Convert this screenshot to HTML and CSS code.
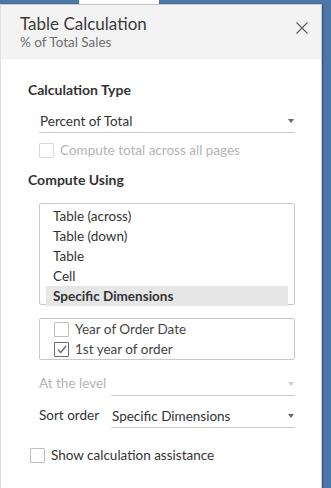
FILE: index.html
```html
<!DOCTYPE html>
<html lang="en">
<head>
    <meta charset="UTF-8">
    <meta name="viewport" content="width=device-width, initial-scale=1.0">
    <title>Table Calculation</title>
    <link rel="stylesheet" href="styles.css">
</head>
<body>
    <div class="topbar"><div class="tab"></div></div>
    <div class="dialog">
        <div class="dialog-header">
            <div class="titles">
                <div class="title">Table Calculation</div>
                <div class="subtitle">% of Total Sales</div>
            </div>
            <svg class="close" width="12" height="12" viewBox="0 0 12 12">
                <path d="M0.5 0.5 L11.5 11.5 M11.5 0.5 L0.5 11.5" stroke="#606060" stroke-width="1.2" fill="none"/>
            </svg>
        </div>

        <div class="dialog-body">
            <h3 class="section-title">Calculation Type</h3>
            <div class="select">
                <span>Percent of Total</span>
                <span class="arrow"></span>
            </div>
            <div class="check disabled indent">
                <span class="box"></span>
                <span>Compute total across all pages</span>
            </div>

            <h3 class="section-title compute">Compute Using</h3>
            <div class="listbox">
                <div class="item">Table (across)</div>
                <div class="item">Table (down)</div>
                <div class="item">Table</div>
                <div class="item">Cell</div>
                <div class="item selected">Specific Dimensions</div>
            </div>

            <div class="dimbox">
                <div class="check">
                    <span class="box"></span>
                    <span>Year of Order Date</span>
                </div>
                <div class="check">
                    <span class="box checked">
                        <svg width="10" height="9" viewBox="0 0 10 9"><path d="M1 4.5 L3.8 7.5 L9 1" stroke="#666" stroke-width="1.4" fill="none"/></svg>
                    </span>
                    <span>1st year of order</span>
                </div>
            </div>

            <div class="field-row disabled">
                <span class="field-label">At the level</span>
                <div class="select small">
                    <span></span>
                    <span class="arrow"></span>
                </div>
            </div>
            <div class="field-row">
                <span class="field-label">Sort order</span>
                <div class="select small">
                    <span>Specific Dimensions</span>
                    <span class="arrow"></span>
                </div>
            </div>

            <div class="check assist">
                <span class="box"></span>
                <span>Show calculation assistance</span>
            </div>
        </div>
    </div>
</body>
</html>
```

FILE: styles.css
```css
:root {
    --blue: #4b76a6;
    --text: #333333;
    --text-muted: #666666;
    --disabled: #b4b4b4;
    --border: #c8c8c8;
    --header: #f3f3f3;
}

* {
    margin: 0;
    padding: 0;
    box-sizing: border-box;
    font-family: Lato, "Noto Sans", sans-serif;
}

body {
    background: var(--blue);
    width: 331px;
    height: 488px;
    overflow: hidden;
}

.topbar {
    height: 4px;
    padding-left: 79px;
}

.tab {
    width: 80px;
    height: 4px;
    background: #ffffff;
}

.dialog {
    width: 322px;
    height: 484px;
    background: #ffffff;
    border-top: 1px solid var(--border);
    border-right: 1px solid var(--border);
    border-left: 1px solid #e0e0e0;
    box-shadow: 1px 0 1px rgba(0,0,0,0.25);
}

.dialog-header {
    background: var(--header);
    height: 54px;
    padding: 8px 13px 0 19px;
    display: flex;
    justify-content: space-between;
    align-items: flex-start;
}

.title {
    font-size: 17px;
    line-height: 21px;
    color: #3a3a3a;
}

.subtitle {
    font-size: 13.5px;
    line-height: 16px;
    color: #6e6e6e;
}

.close {
    margin-top: 9px;
}

.dialog-body {
    padding: 23px 0 0 27px;
    color: var(--text);
    font-size: 13.5px;
}

.section-title {
    font-size: 14px;
    font-weight: 700;
    line-height: 16px;
    color: #333333;
}

.section-title.compute {
    margin-top: 12px;
}

.select {
    margin: 11px 0 0 11px;
    width: 256px;
    height: 24px;
    border-bottom: 1px solid var(--border);
    display: flex;
    justify-content: space-between;
    align-items: center;
    padding-left: 1px;
    color: var(--text);
}

.arrow {
    width: 0;
    height: 0;
    border-left: 3.5px solid transparent;
    border-right: 3.5px solid transparent;
    border-top: 4px solid #666666;
    margin-right: 1px;
}

.check {
    display: flex;
    align-items: center;
    gap: 6px;
    line-height: 20px;
}

.box {
    width: 15px;
    height: 15px;
    border: 1px solid #bdbdbd;
    border-radius: 1px;
    background: #ffffff;
    display: flex;
    align-items: center;
    justify-content: center;
}

.box.checked {
    border-color: #6a6a6a;
}

.check.indent {
    margin: 7px 0 0 11px;
}

.check.disabled {
    color: var(--disabled);
}

.check.disabled .box {
    border-color: #d8d8d8;
}

.listbox {
    margin: 15px 0 0 11px;
    width: 256px;
    height: 102px;
    border: 1px solid var(--border);
    border-radius: 2px;
    padding: 2px 6px 0 6px;
}

.item {
    height: 20px;
    line-height: 20px;
    padding-left: 7px;
    color: var(--text);
}

.item.selected {
    background: #e6e6e6;
    font-weight: 700;
}

.dimbox {
    margin: 13px 0 0 11px;
    width: 256px;
    height: 42px;
    border: 1px solid var(--border);
    border-radius: 2px;
    padding: 0 0 0 14px;
    color: #444444;
}

.field-row {
    display: flex;
    align-items: flex-end;
    margin-left: 11px;
    margin-top: 12px;
}

.field-row + .field-row {
    margin-top: 8px;
}

.field-label {
    width: 72px;
    line-height: 20px;
    padding-bottom: 3px;
}

.field-row .select.small {
    margin: 0;
    width: 184px;
}

.field-row.disabled {
    color: var(--disabled);
}

.field-row.disabled .arrow {
    border-top-color: #d0d0d0;
}

.check.assist {
    margin-top: 17px;
    margin-left: 2px;
}
```
